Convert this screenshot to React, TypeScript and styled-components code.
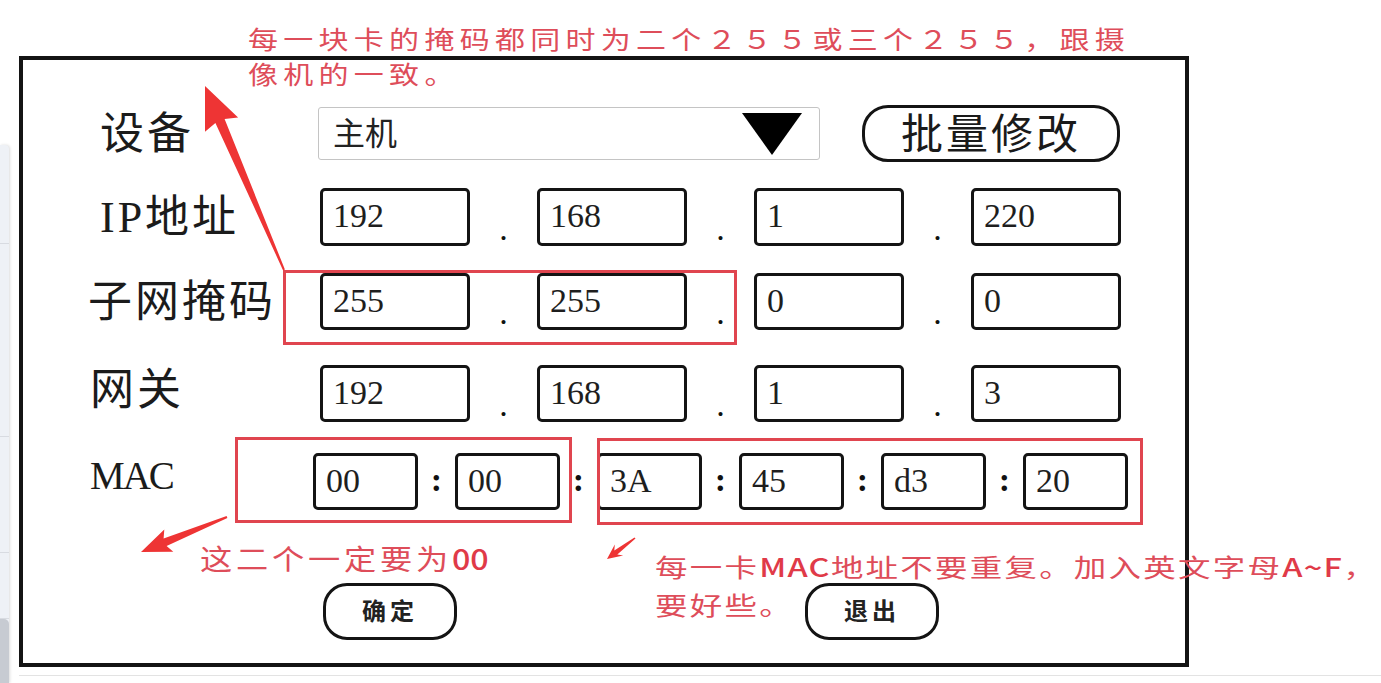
import React from "react";
import styled, { createGlobalStyle } from "styled-components";

const INK = "#141414";
const MARK = "#e0454f";
const NOTE = "#de4d5a";

const GlobalStyle = createGlobalStyle`
  html, body {
    margin: 0;
    padding: 0;
    background: #fff;
  }

  body {
    font-family: "Liberation Serif", "Noto Sans CJK SC", serif;
    overflow: hidden;
  }
`;

const Page = styled.div`
  position: relative;
  display: flex;
  width: 1381px;
  height: 683px;
  overflow: hidden;
  background: #fff;
`;

const SideStrip = styled.aside`
  display: flex;
  flex-direction: column;
  width: 9px;
  margin-top: 145px;
  background: #eef1f6;
  border-top-right-radius: 4px;
  box-shadow: 1px 0 3px rgba(0, 0, 0, 0.14);
`;

const StripCell = styled.div<{ $h?: number; $dark?: boolean }>`
  flex: ${(p) => (p.$dark ? "1" : "none")};
  height: ${(p) => (p.$h ? `${p.$h}px` : "auto")};
  border-bottom: ${(p) => (p.$dark ? "none" : "1px solid #d8dbe1")};
  background: ${(p) => (p.$dark ? "#c7cbd2" : "transparent")};
  border-top-right-radius: ${(p) => (p.$dark ? "5px" : "0")};
`;

const Body = styled.div`
  display: flex;
  flex-direction: column;
  flex: 1;
  margin-left: 10px;
`;

const Frame = styled.section`
  display: flex;
  flex-direction: column;
  box-sizing: border-box;
  width: 1170px;
  height: 611px;
  margin-top: 56px;
  border: 4px solid ${INK};
`;

const BottomRule = styled.div`
  height: 1px;
  margin-top: 8px;
  background: #e3e3e3;
`;

const Row = styled.div<{ $top: number; $h: number }>`
  display: flex;
  align-items: stretch;
  height: ${(p) => p.$h}px;
  margin-top: ${(p) => p.$top}px;
`;

const Label = styled.div<{ $w: number; $pad: number; $lift: number; $tight?: boolean }>`
  display: flex;
  align-items: center;
  box-sizing: border-box;
  width: ${(p) => p.$w}px;
  padding-left: ${(p) => p.$pad}px;
  padding-bottom: ${(p) => p.$lift}px;
  font-size: ${(p) => (p.$tight ? "39px" : "44px")};
  letter-spacing: ${(p) => (p.$tight ? "-2px" : "3px")};
  color: #1b1b1b;
  white-space: nowrap;
`;

const Select = styled.div`
  display: flex;
  align-items: center;
  justify-content: space-between;
  align-self: center;
  box-sizing: border-box;
  width: 502px;
  height: 53px;
  padding: 0 17px 6px 14px;
  border: 1px solid #c4c4c4;
  border-radius: 3px;
  font-size: 32px;
  color: #222;

  svg {
    margin-bottom: -6px;
  }
`;

const BatchButton = styled.button`
  display: flex;
  align-items: center;
  justify-content: center;
  box-sizing: border-box;
  width: 258px;
  height: 100%;
  margin-left: 42px;
  padding: 0 0 7px;
  border: 3px solid ${INK};
  border-radius: 26px;
  background: #fff;
  font-family: "Noto Sans CJK SC", sans-serif;
  font-size: 42px;
  letter-spacing: 3px;
  color: #1a1a1a;
`;

const Field = styled.div<{ $w: number }>`
  display: flex;
  align-items: center;
  box-sizing: border-box;
  width: ${(p) => p.$w}px;
  height: 100%;
  padding: 0 0 2px 10px;
  border: 3px solid ${INK};
  border-radius: 5px;
  font-size: 34px;
  color: #1e1e1e;
`;

const Sep = styled.span<{ $w: number; $low?: boolean }>`
  display: flex;
  align-items: ${(p) => (p.$low ? "flex-end" : "center")};
  justify-content: center;
  box-sizing: border-box;
  width: ${(p) => p.$w}px;
  padding-bottom: ${(p) => (p.$low ? "0" : "4px")};
  font-size: 34px;
  font-weight: ${(p) => (p.$low ? 400 : 700)};
  line-height: 1;
  color: #111;
`;

const ActionButton = styled.button<{ $gap: number }>`
  display: flex;
  align-items: center;
  justify-content: center;
  box-sizing: border-box;
  width: 134px;
  height: 100%;
  margin-left: ${(p) => p.$gap}px;
  padding: 0 0 4px;
  border: 3px solid ${INK};
  border-radius: 24px;
  background: #fff;
  font-family: "Noto Sans CJK SC", sans-serif;
  font-size: 24px;
  font-weight: 700;
  letter-spacing: 4px;
  color: #222;
`;

/* annotation layer: lies over the wireframe */

const MarkBox = styled.div<{ $x: number; $y: number; $w: number; $h: number }>`
  position: absolute;
  left: ${(p) => p.$x}px;
  top: ${(p) => p.$y}px;
  width: ${(p) => p.$w}px;
  height: ${(p) => p.$h}px;
  box-sizing: border-box;
  border: 3px solid ${MARK};
  pointer-events: none;
`;

const Note = styled.div<{ $x: number; $y: number; $size: number; $ls: number; $lh: number; $sx: number }>`
  position: absolute;
  left: ${(p) => p.$x}px;
  top: ${(p) => p.$y}px;
  font-family: "Noto Sans CJK SC", sans-serif;
  font-size: ${(p) => p.$size}px;
  letter-spacing: ${(p) => p.$ls}px;
  line-height: ${(p) => p.$lh}px;
  color: ${NOTE};
  white-space: nowrap;
  transform: scaleX(${(p) => p.$sx});
  transform-origin: 0 0;
  pointer-events: none;
`;

const Strong = styled.span<{ $ls?: number }>`
  font-weight: 500;
  color: #e03a48;
  letter-spacing: ${(p) => p.$ls ?? 1}px;
`;

const ArrowLayer = styled.svg`
  position: absolute;
  left: 0;
  top: 0;
  pointer-events: none;
`;

type Pt = [number, number];

const arrowPoints = (tail: Pt, tip: Pt, headLen: number, headHalf: number, shaftHalf: number, tailHalf: number) => {
  const dx = tip[0] - tail[0];
  const dy = tip[1] - tail[1];
  const len = Math.hypot(dx, dy);
  const ux = dx / len;
  const uy = dy / len;
  const nx = -uy;
  const ny = ux;
  const bx = tip[0] - ux * headLen;
  const by = tip[1] - uy * headLen;
  const pts: Pt[] = [
    tip,
    [bx + nx * headHalf, by + ny * headHalf],
    [bx + ux * 4 + nx * shaftHalf, by + uy * 4 + ny * shaftHalf],
    [tail[0] + nx * tailHalf, tail[1] + ny * tailHalf],
    [tail[0] - nx * tailHalf, tail[1] - ny * tailHalf],
    [bx + ux * 4 - nx * shaftHalf, by + uy * 4 - ny * shaftHalf],
    [bx - nx * headHalf, by - ny * headHalf],
  ];
  return pts.map((p) => `${p[0].toFixed(1)},${p[1].toFixed(1)}`).join(" ");
};

const ipRows = [
  { label: "IP地址", pad: 77, top: 26, h: 58, lift: 8, values: ["192", "168", "1", "220"] },
  { label: "子网掩码", pad: 65, top: 27, h: 57, lift: 8, values: ["255", "255", "0", "0"] },
  { label: "网关", pad: 67, top: 35, h: 57, lift: 16, values: ["192", "168", "1", "3"] },
];

const macValues = ["00", "00", "3A", "45", "d3", "20"];

export default function App() {
  return (
    <>
      <GlobalStyle />
      <Page>
        <SideStrip>
          <StripCell $h={98} />
          <StripCell $h={192} />
          <StripCell $h={115} />
          <StripCell $h={65} />
          <StripCell $dark />
        </SideStrip>

        <Body>
          <Frame>
            <Row $top={45} $h={57}>
              <Label $w={295} $pad={77} $lift={8}>设备</Label>
              <Select>
                <span>主机</span>
                <svg width="60" height="42" viewBox="0 0 60 42">
                  <polygon points="0,0 60,0 30,42" fill="#000" />
                </svg>
              </Select>
              <BatchButton>批量修改</BatchButton>
            </Row>

            {ipRows.map((row) => (
              <Row key={row.label} $top={row.top} $h={row.h}>
                <Label $w={297} $pad={row.pad} $lift={row.lift}>{row.label}</Label>
                {row.values.map((v, i) => (
                  <React.Fragment key={i}>
                    {i > 0 && <Sep $w={67} $low>.</Sep>}
                    <Field $w={150}>{v}</Field>
                  </React.Fragment>
                ))}
              </Row>
            ))}

            <Row $top={31} $h={57}>
              <Label $w={290} $pad={67} $lift={12} $tight>MAC</Label>
              {macValues.map((v, i) => (
                <React.Fragment key={i}>
                  {i > 0 && <Sep $w={37}>:</Sep>}
                  <Field $w={105}>{v}</Field>
                </React.Fragment>
              ))}
            </Row>

            <Row $top={73} $h={57}>
              <ActionButton $gap={300}>确定</ActionButton>
              <ActionButton $gap={348}>退出</ActionButton>
            </Row>
          </Frame>
          <BottomRule />
        </Body>

        <MarkBox $x={283} $y={270} $w={454} $h={75} />
        <MarkBox $x={235} $y={437} $w={337} $h={86} />
        <MarkBox $x={597} $y={438} $w={546} $h={87} />

        <ArrowLayer width="1381" height="683" viewBox="0 0 1381 683">
          <polygon points={arrowPoints([284, 270], [205, 86], 42, 18, 5, 1)} fill="#ee3434" />
          <polygon points={arrowPoints([227, 517], [141, 552], 30, 12, 4, 1)} fill="#ee3434" />
          <polygon points={arrowPoints([635, 538], [607, 559], 15, 7, 2.5, 0.8)} fill="#ee3434" />
        </ArrowLayer>

        <Note $x={248} $y={21} $size={25} $ls={4.4} $lh={35} $sx={1.2}>
          每一块卡的掩码都同时为二个２５５或三个２５５，跟摄
          <br />
          像机的一致。
        </Note>

        <Note $x={200} $y={540} $size={28} $ls={3.3} $lh={36} $sx={1.15}>
          这二个一定要为<Strong $ls={0}>00</Strong>
        </Note>

        <Note $x={655} $y={547} $size={25} $ls={1.7} $lh={38} $sx={1.3}>
          每一卡<Strong>MAC</Strong>地址不要重复。加入英文字母<Strong>A~F</Strong>，
          <br />
          要好些。
        </Note>
      </Page>
    </>
  );
}
